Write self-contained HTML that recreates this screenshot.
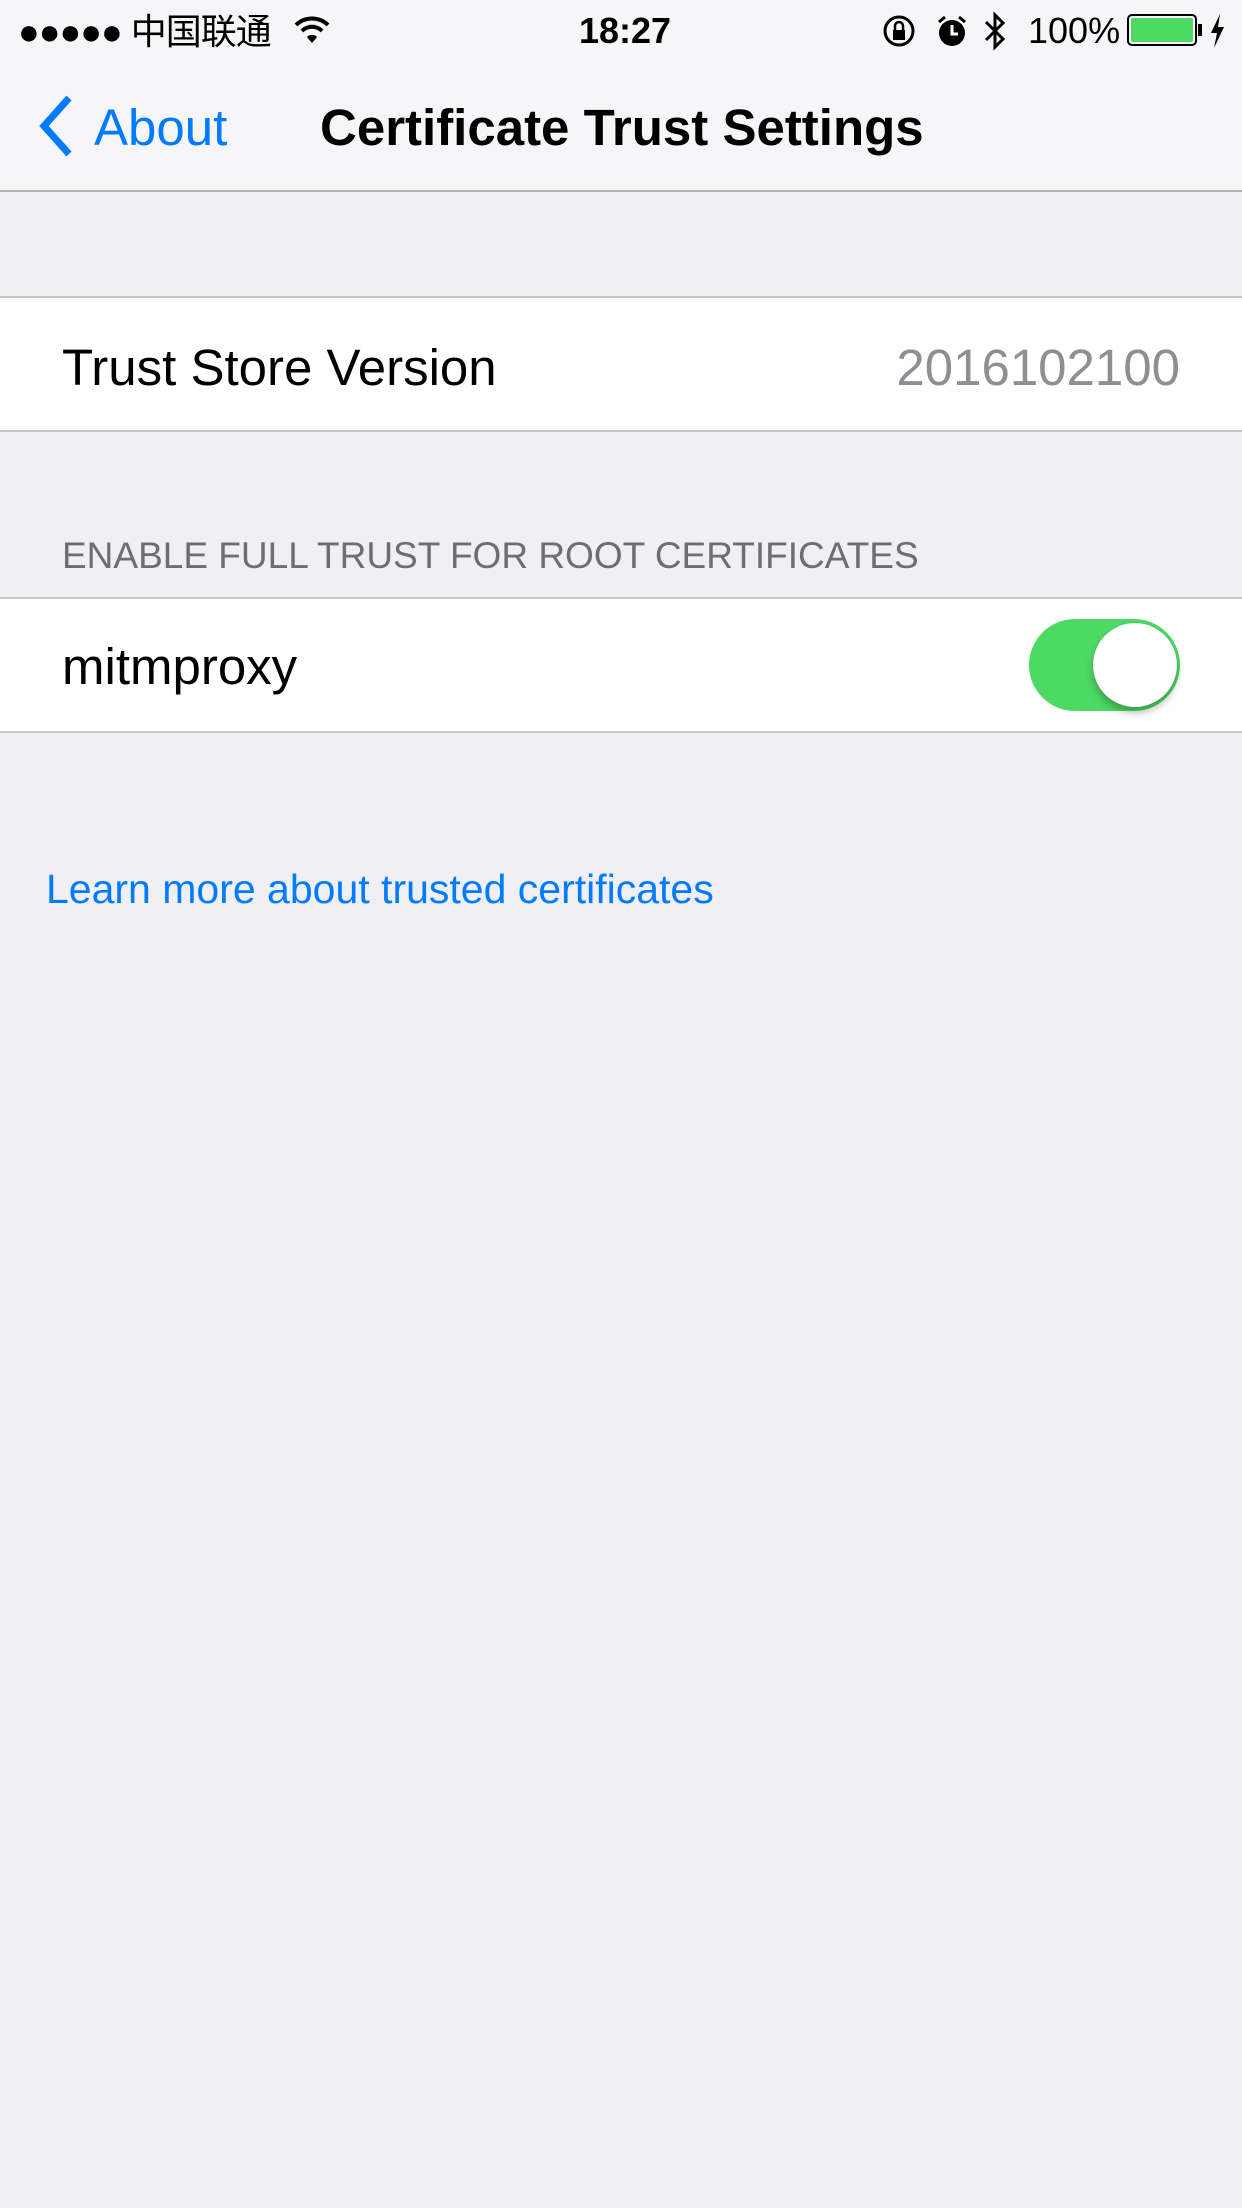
<!DOCTYPE html>
<html><head><meta charset="utf-8"><style>
*{margin:0;padding:0;box-sizing:border-box}
body{width:1242px;height:2208px;background:#efeff4;font-family:"Liberation Sans","Noto Sans CJK SC",sans-serif;position:relative;overflow:hidden;color:#000}
.abs{position:absolute;white-space:nowrap}
#nav{position:absolute;left:0;top:0;width:1242px;height:192px;background:#f6f6f8;border-bottom:2px solid #b2b2b2}
.row{position:absolute;left:0;width:1242px;background:#fff;border-top:2px solid #c8c7cc;border-bottom:2px solid #c8c7cc}
</style></head><body>
<div id="nav">
  <div class="abs" style="left:18px;top:12px;font-size:36px;line-height:40px;letter-spacing:-1px">●●●●● 中国联通</div>
  <svg class="abs" style="left:292px;top:14px" width="40" height="32" viewBox="0 0 40 32"><path d="M4 11a23 23 0 0 1 32 0" stroke="#000" stroke-width="4" fill="none"/><path d="M10 17a14 14 0 0 1 20 0" stroke="#000" stroke-width="4" fill="none"/><path d="M15 23a7 7 0 0 1 10 0L20 29z" fill="#000"/></svg>
  <div class="abs" style="left:579px;top:10px;font-size:36px;font-weight:bold;line-height:42px">18:27</div>
  <svg class="abs" style="left:882px;top:14px" width="36" height="36" viewBox="0 0 36 36"><circle cx="17" cy="17" r="14" stroke="#000" stroke-width="3" fill="none"/><rect x="11" y="16" width="12" height="10" fill="#000"/><path d="M13 16v-4a4 4 0 0 1 8 0v4" stroke="#000" stroke-width="2.5" fill="none"/></svg>
  <svg class="abs" style="left:936px;top:14px" width="32" height="36" viewBox="0 0 32 36"><circle cx="16" cy="19" r="13" fill="#000"/><path d="M16 11v9h6" stroke="#fff" stroke-width="3" fill="none"/><path d="M3 8l6-5M29 8l-6-5" stroke="#000" stroke-width="3"/></svg>
  <svg class="abs" style="left:982px;top:10px" width="26" height="42" viewBox="0 0 26 42"><path d="M4 12l17 17-8 8V5l8 8L4 30" stroke="#000" stroke-width="3" fill="none"/></svg>
  <div class="abs" style="left:1028px;top:10px;font-size:36px;line-height:42px">100%</div>
  <div class="abs" style="left:1127px;top:14px;width:70px;height:32px;border:2px solid #000;border-radius:5px;padding:2px"><div style="width:100%;height:100%;background:#4cd964;border-radius:2px"></div></div>
  <div class="abs" style="left:1198px;top:24px;width:4px;height:12px;background:#000"></div>
  <svg class="abs" style="left:1208px;top:12px" width="18" height="38" viewBox="0 0 18 38"><path d="M12 2L3 21h6l-3 15 10-21h-6z" fill="#000"/></svg>
  <svg class="abs" style="left:36px;top:94px" width="40" height="64" viewBox="0 0 40 64"><path d="M33 4L8 32l25 28" stroke="#007aff" stroke-width="7" fill="none"/></svg>
  <div class="abs" style="left:94px;top:98px;font-size:51px;line-height:60px;color:#007aff">About</div>
  <div class="abs" style="left:320px;top:98px;font-size:51px;line-height:60px;font-weight:bold">Certificate Trust Settings</div>
</div>
<div class="row" style="top:296px;height:136px">
  <div class="abs" style="left:62px;top:42px;font-size:51px;line-height:56px">Trust Store Version</div>
  <div class="abs" style="right:62px;top:42px;font-size:51px;line-height:56px;color:#8e8e93">2016102100</div>
</div>
<div class="abs" style="left:62px;top:534px;font-size:37px;line-height:44px;color:#6d6d72">ENABLE FULL TRUST FOR ROOT CERTIFICATES</div>
<div class="row" style="top:597px;height:136px">
  <div class="abs" style="left:62px;top:40px;font-size:51px;line-height:56px">mitmproxy</div>
  <div class="abs" style="left:1029px;top:20px;width:151px;height:92px;border-radius:46px;background:#4cd964"></div>
  <div class="abs" style="left:1093px;top:24px;width:84px;height:84px;border-radius:50%;background:#fff;box-shadow:0 6px 8px rgba(0,0,0,0.25),0 0 1px rgba(0,0,0,0.2)"></div>
</div>
<div class="abs" style="left:46px;top:865px;font-size:41px;line-height:48px;color:#007aff">Learn more about trusted certificates</div>
</body></html>
